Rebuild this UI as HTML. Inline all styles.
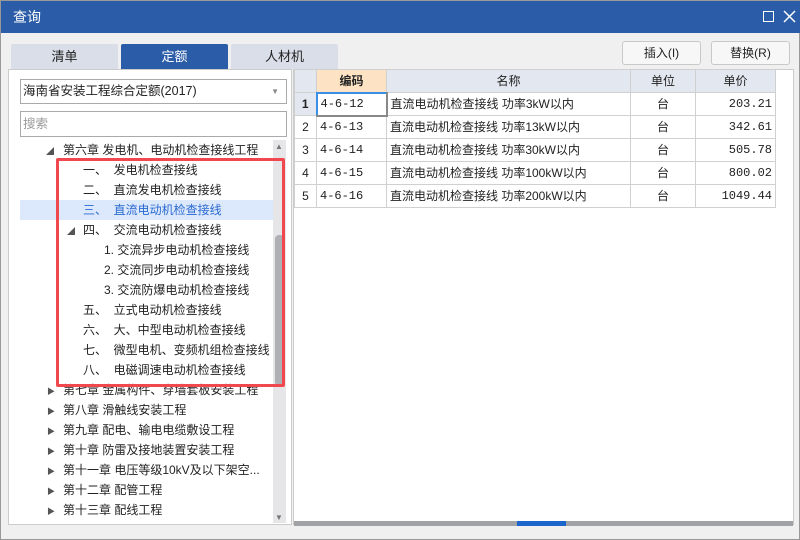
<!DOCTYPE html>
<html><head><meta charset="utf-8"><style>
*{margin:0;padding:0;box-sizing:border-box}
body{width:800px;height:540px;background:#f0f0f0;font-family:"Liberation Sans","Noto Sans CJK SC",sans-serif;font-size:12px;color:#222;position:relative;overflow:hidden;border:1px solid #999}
.abs{position:absolute}
.title{left:0;top:0;width:800px;height:32px;background:#2a5ca8;color:#fff;font-size:14px;line-height:32px;padding-left:12px}
.tab{top:43px;height:25px;width:107px;text-align:center;line-height:25px;font-size:13px;background:#d9dee8;border-radius:2px 2px 0 0}
.btn{top:40px;height:24px;width:79px;border:1px solid #c8c8c8;border-radius:3px;background:#f7f7f7;text-align:center;line-height:22px;font-size:12px}
.row{position:absolute;height:20px;line-height:20px;font-size:12px;white-space:nowrap}
.tri{position:absolute;font-size:8px;color:#555}
table{border-collapse:collapse;position:absolute;left:293px;top:68px;font-size:12px}
td{border:1px solid #d0d0d0;height:23px;padding:0 3px;background:#fff;white-space:nowrap;line-height:20px}
th{border:1px solid #d0d0d0;height:23px;background:#e3e8f0;font-weight:normal;font-size:12px;line-height:20px}
.m{font-family:"Liberation Mono","Noto Sans CJK SC",monospace;font-size:12px}
</style></head><body>
<div class="abs title">查询</div>
<div class="abs" style="left:762px;top:10px;width:11px;height:11px;border:1.5px solid #fff"></div>
<svg class="abs" style="left:782px;top:9px" width="13" height="13"><path d="M1 1L12 12M12 1L1 12" stroke="#fff" stroke-width="1.5"/></svg>
<div class="abs tab" style="left:10px">清单</div>
<div class="abs tab" style="left:120px;background:#2a5ca8;color:#fff">定额</div>
<div class="abs tab" style="left:230px">人材机</div>
<div class="abs btn" style="left:621px">插入(I)</div>
<div class="abs btn" style="left:710px">替换(R)</div>
<div class="abs" style="left:7px;top:68px;width:284px;height:456px;background:#fff;border:1px solid #ccc"></div>
<div class="abs" style="left:19px;top:78px;width:267px;height:25px;border:1px solid #aaa;line-height:23px;padding-left:2px;font-size:12.5px">海南省安装工程综合定额(2017)<span style="position:absolute;right:7px;top:0;font-size:8px;color:#888">▼</span></div>
<div class="abs" style="left:19px;top:110px;width:267px;height:26px;border:1px solid #aaa;line-height:24px;padding-left:2px;color:#999;font-size:12.5px">搜索</div>
<div class="abs" style="left:272px;top:139px;width:13px;height:383px;background:#e6e6e8"></div>
<div class="abs" style="left:274px;top:234px;width:9px;height:151px;background:#aeb0b4;border-radius:4px"></div>
<div class="abs" style="left:274px;top:141px;font-size:8px;color:#777">▲</div>
<div class="abs" style="left:274px;top:512px;font-size:8px;color:#777">▼</div>
<div class="abs" style="left:19px;top:199px;width:253px;height:20px;background:#dce8fc"></div>
<div style="position:absolute;left:0;top:0;width:272px;height:522px;overflow:hidden">
<span class="tri" style="left:45px;top:145px">◢</span><div class="row" style="left:62px;top:139px">第六章 发电机、电动机检查接线工程</div>
<div class="row" style="left:82px;top:159px">一、&nbsp; 发电机检查接线</div>
<div class="row" style="left:82px;top:179px">二、&nbsp; 直流发电机检查接线</div>
<div class="row" style="left:82px;top:199px;color:#2a6ad0">三、&nbsp; 直流电动机检查接线</div>
<span class="tri" style="left:66px;top:225px">◢</span><div class="row" style="left:82px;top:219px">四、&nbsp; 交流电动机检查接线</div>
<div class="row" style="left:103px;top:239px">1. 交流异步电动机检查接线</div>
<div class="row" style="left:103px;top:259px">2. 交流同步电动机检查接线</div>
<div class="row" style="left:103px;top:279px">3. 交流防爆电动机检查接线</div>
<div class="row" style="left:82px;top:299px">五、&nbsp; 立式电动机检查接线</div>
<div class="row" style="left:82px;top:319px">六、&nbsp; 大、中型电动机检查接线</div>
<div class="row" style="left:82px;top:339px">七、&nbsp; 微型电机、变频机组检查接线</div>
<div class="row" style="left:82px;top:359px">八、&nbsp; 电磁调速电动机检查接线</div>
<span class="tri" style="left:46px;top:385px">▶</span><div class="row" style="left:62px;top:379px">第七章 金属构件、穿墙套板安装工程</div>
<span class="tri" style="left:46px;top:405px">▶</span><div class="row" style="left:62px;top:399px">第八章 滑触线安装工程</div>
<span class="tri" style="left:46px;top:425px">▶</span><div class="row" style="left:62px;top:419px">第九章 配电、输电电缆敷设工程</div>
<span class="tri" style="left:46px;top:445px">▶</span><div class="row" style="left:62px;top:439px">第十章 防雷及接地装置安装工程</div>
<span class="tri" style="left:46px;top:465px">▶</span><div class="row" style="left:62px;top:459px">第十一章 电压等级10kV及以下架空...</div>
<span class="tri" style="left:46px;top:485px">▶</span><div class="row" style="left:62px;top:479px">第十二章 配管工程</div>
<span class="tri" style="left:46px;top:505px">▶</span><div class="row" style="left:62px;top:499px">第十三章 配线工程</div>
<div class="row" style="left:62px;top:519px">第十四章 照明器具安装工程</div>
</div>
<div class="abs" style="left:55px;top:157px;width:229px;height:229px;border:3px solid #f0484e;border-radius:2px"></div>
<div class="abs" style="left:292px;top:68px;width:501px;height:456px;background:#fff;border:1px solid #ccc"></div>
<table>
<tr><th style="width:22px"></th><th style="width:70px;background:#fde3c4;font-weight:bold">编码</th><th style="width:244px">名称</th><th style="width:65px">单位</th><th style="width:80px">单价</th></tr>
<tr><td style="background:#e3e8f0;font-weight:bold;text-align:center;padding:0">1</td><td class="m" style="border:2px solid #888;border-left-color:#3a8ee6;border-top-color:#3a8ee6">4-6-12</td><td>直流电动机检查接线 功率3kW以内</td><td style="text-align:center">台</td><td class="m" style="text-align:right">203.21</td></tr>
<tr><td style="text-align:center;padding:0">2</td><td class="m">4-6-13</td><td>直流电动机检查接线 功率13kW以内</td><td style="text-align:center">台</td><td class="m" style="text-align:right">342.61</td></tr>
<tr><td style="text-align:center;padding:0">3</td><td class="m">4-6-14</td><td>直流电动机检查接线 功率30kW以内</td><td style="text-align:center">台</td><td class="m" style="text-align:right">505.78</td></tr>
<tr><td style="text-align:center;padding:0">4</td><td class="m">4-6-15</td><td>直流电动机检查接线 功率100kW以内</td><td style="text-align:center">台</td><td class="m" style="text-align:right">800.02</td></tr>
<tr><td style="text-align:center;padding:0">5</td><td class="m">4-6-16</td><td>直流电动机检查接线 功率200kW以内</td><td style="text-align:center">台</td><td class="m" style="text-align:right">1049.44</td></tr>
</table>
<div class="abs" style="left:293px;top:520px;width:499px;height:5px;background:#a0a2a6"></div>
<div class="abs" style="left:516px;top:520px;width:49px;height:5px;background:#1a66cc"></div>
</body></html>
